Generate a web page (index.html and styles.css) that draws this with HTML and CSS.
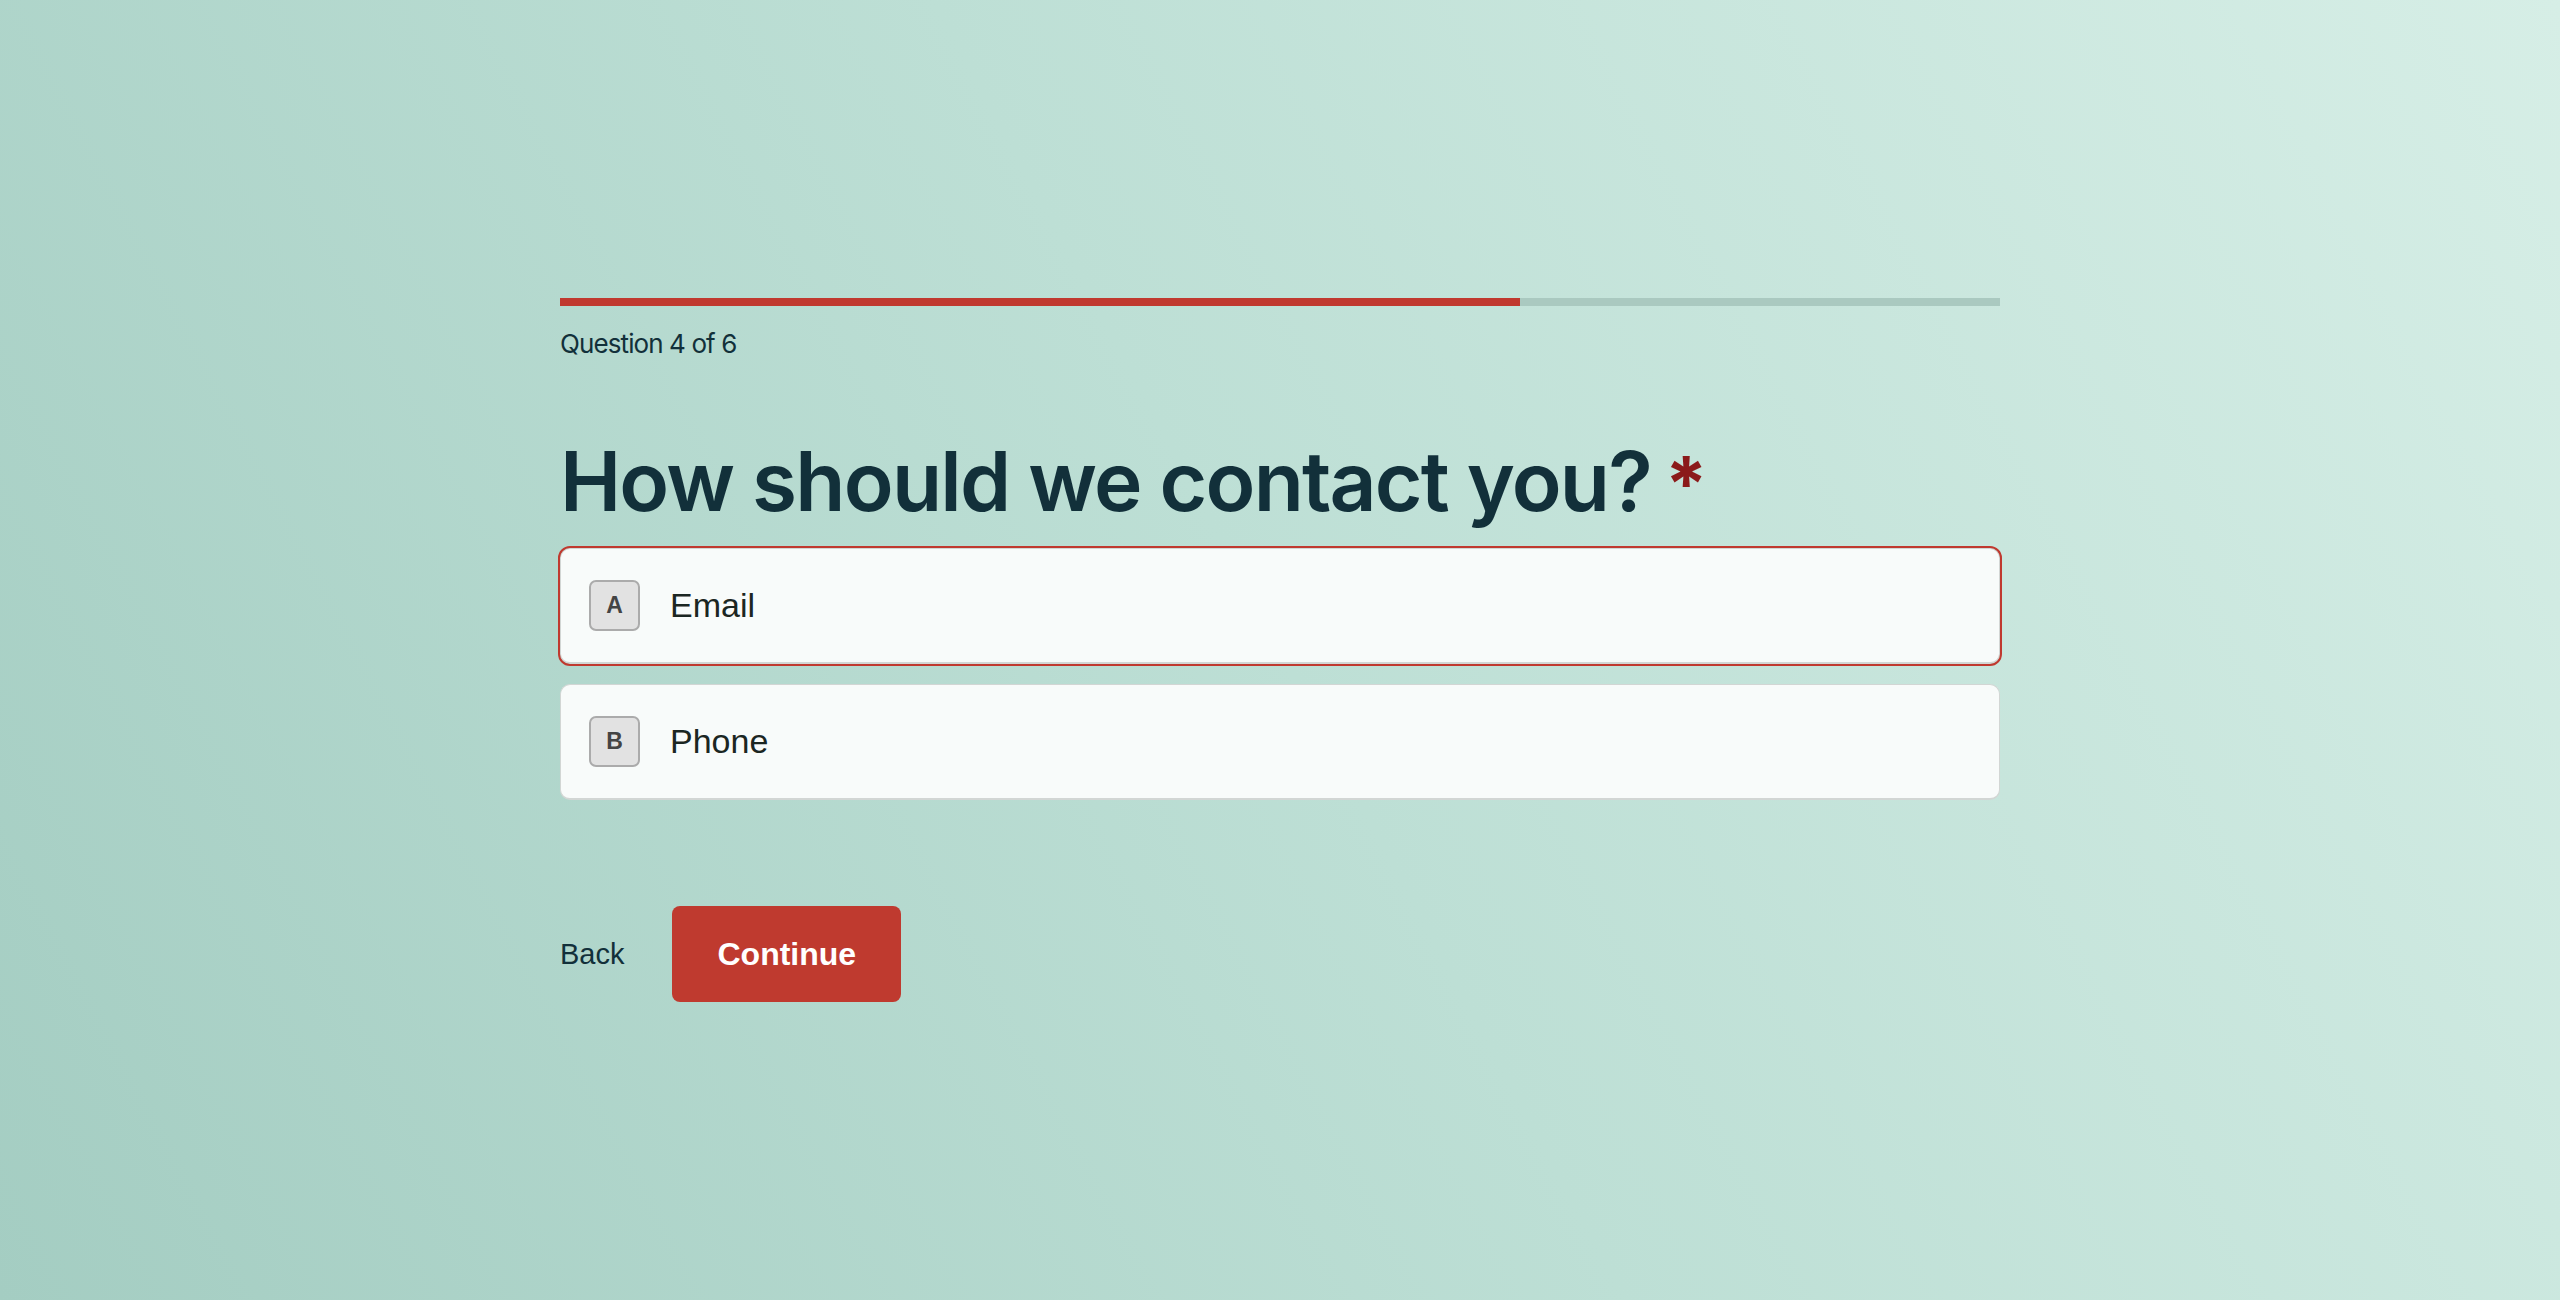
FILE: index.html
```html
<!DOCTYPE html>
<html lang="en">
<head>
<meta charset="utf-8">
<title>How should we contact you?</title>
<link rel="stylesheet" href="styles.css">
</head>
<body>
<main class="form">
  <div class="progress"><div class="progress-fill" style="width: 66.6667%"></div></div>
  <p class="step">Question 4 of 6</p>
  <h1 class="question">How should we contact you? <span class="required">*</span></h1>
  <div class="options">
    <button class="option selected" type="button"><span class="key">A</span><span class="label">Email</span></button>
    <button class="option" type="button"><span class="key">B</span><span class="label">Phone</span></button>
  </div>
  <div class="actions">
    <button class="back" type="button">Back</button>
    <button class="continue" type="button">Continue</button>
  </div>
</main>
</body>
</html>
```

FILE: styles.css
```css
html, body {
  margin: 0;
  padding: 0;
}
body {
  min-height: 100vh;
  background: linear-gradient(62deg, #a4cdc2 0%, #bddfd5 50%, #d6eee6 100%);
  color: #12303a;
  font-family: Inter, "Noto Sans", sans-serif;
}
.form {
  width: 1440px;
  margin: 0 auto;
  padding-top: 298px;
  display: flex;
  flex-direction: column;
}
.progress {
  height: 8px;
  background: #aac9c0;
}
.progress-fill {
  height: 100%;
  background: #c0392f;
}
.step {
  margin: 20px 0 0;
  font-size: 26px;
  line-height: 36px;
  font-weight: 400;
  letter-spacing: -0.9px;
  color: #12303a;
}
.question {
  margin: 71px 0 0;
  height: 98px;
  font-size: 82px;
  line-height: 98px;
  font-weight: 600;
  letter-spacing: -1.8px;
  color: #12303a;
}
.required {
  color: #8b1a1a;
  font-weight: 700;
  font-size: 76px;
  line-height: 1;
  margin-left: -5px;
}
.options {
  margin-top: 17px;
  display: flex;
  flex-direction: column;
  gap: 20px;
}
.option {
  box-sizing: border-box;
  height: 116px;
  display: flex;
  align-items: center;
  gap: 30px;
  padding: 0 0 0 28px;
  margin: 0;
  background: #f8fbfa;
  border: 1px solid #d2d6d4;
  border-bottom-width: 2px;
  border-radius: 10px;
  text-align: left;
  cursor: pointer;
}
.option.selected {
  outline: 2px solid #c0392f;
  outline-offset: 0;
}
.key {
  box-sizing: border-box;
  width: 51px;
  height: 51px;
  display: flex;
  align-items: center;
  justify-content: center;
  background: #e2e2e2;
  border: 2px solid #ababab;
  border-radius: 7px;
  font-family: "Liberation Sans", Arial, sans-serif;
  font-weight: 700;
  font-size: 23px;
  color: #444;
}
.label {
  font-family: "Liberation Sans", Arial, sans-serif;
  font-size: 34px;
  color: #1b2622;
}
.actions {
  margin-top: 106px;
  display: flex;
  align-items: center;
  gap: 48px;
}
.back {
  padding: 0;
  margin: 0;
  border: 0;
  background: none;
  font-family: "Liberation Sans", Arial, sans-serif;
  font-size: 29px;
  color: #12303a;
  cursor: pointer;
}
.continue {
  margin: 0;
  height: 96px;
  padding: 0 45px;
  border: 0;
  border-radius: 8px;
  background: #bf3a2f;
  color: #fff;
  font-family: "Liberation Sans", Arial, sans-serif;
  font-weight: 700;
  font-size: 32px;
  cursor: pointer;
}
```
